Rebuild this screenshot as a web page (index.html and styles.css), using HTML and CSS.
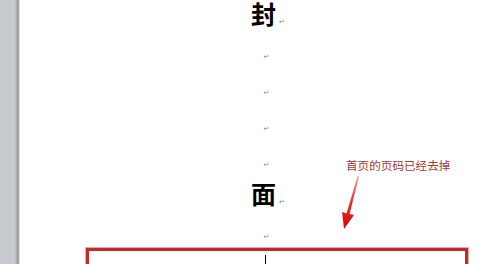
FILE: index.html
```html
<!DOCTYPE html>
<html lang="zh">
<head>
<meta charset="utf-8">
<link rel="stylesheet" href="styles.css">
</head>
<body>
<div class="app">
  <div class="ruler"></div>
  <div class="page">
    <div class="doc">
      <p class="para big first">封<span class="mark">↵</span></p>
      <p class="para"><span class="mark">↵</span></p>
      <p class="para"><span class="mark">↵</span></p>
      <p class="para"><span class="mark">↵</span></p>
      <p class="para"><span class="mark">↵</span></p>
      <p class="para big">面<span class="mark">↵</span></p>
      <p class="para"><span class="mark">↵</span></p>
    </div>
    <div class="footer-box"><span class="caret"></span></div>
    <div class="note">首页的页码已经去掉</div>
    <svg class="arrow" width="30" height="60" viewBox="0 0 30 60">
      <defs>
        <linearGradient id="g" x1="0" y1="0" x2="0" y2="1">
          <stop offset="0" stop-color="#f4a0a0"/>
          <stop offset="0.5" stop-color="#e23030"/>
          <stop offset="1" stop-color="#e00000"/>
        </linearGradient>
      </defs>
      <path d="M21.5 2 L23 2.6 L13.6 40 L18 41 L8 55 L6 38 L10.6 39.3 Z" fill="url(#g)"/>
    </svg>
  </div>
</div>
</body>
</html>
```
FILE: styles.css
```css
html, body {
  margin: 0;
  padding: 0;
  background: #ffffff;
  overflow: hidden;
}
.app {
  display: flex;
  width: 486px;
  height: 264px;
  overflow: hidden;
}
.ruler {
  width: 20px;
  flex: none;
  background: linear-gradient(to right, #c6cace 0, #c9cdd2 14px, #b9bdc2 16px, #a4a8ad 17px, #8f9398 18px, #b8bbbf 19px, #ffffff 20px);
}
.page {
  position: relative;
  flex: 1;
  background: #ffffff;
}
.doc {
  padding-left: 26px;
  font-family: "Noto Sans CJK SC", "Liberation Sans", sans-serif;
  font-size: 24px;
  line-height: 36px;
}
.para {
  margin: 0;
  height: 36px;
  text-align: center;
  color: #000;
}
.first {
  height: 31px;
  line-height: 26px;
}
.big {
  font-weight: bold;
  font-size: 25px;
  padding-left: 4px;
}
.mark {
  font-family: "DejaVu Sans", sans-serif;
  font-size: 7px;
  font-weight: normal;
  color: #8a8a8a;
  margin-left: 1px;
}
.big .mark {
  margin-left: 3px;
}
.footer-box {
  margin-left: 66px;
  width: 376px;
  height: 18px;
  margin-top: 1px;
  border: 3px solid #c3282c;
  border-bottom: none;
  box-shadow: 0 0 0 1px #e8a8aa;
}
.caret {
  display: block;
  width: 1px;
  height: 13px;
  background: #000;
  margin-left: 176px;
  margin-top: 4px;
}
.note {
  position: absolute;
  left: 326px;
  top: 157px;
  font-family: "Noto Sans CJK SC", sans-serif;
  font-size: 11.6px;
  line-height: 16px;
  color: #a33a36;
  white-space: nowrap;
}
.arrow {
  position: absolute;
  left: 316px;
  top: 174px;
}
```
